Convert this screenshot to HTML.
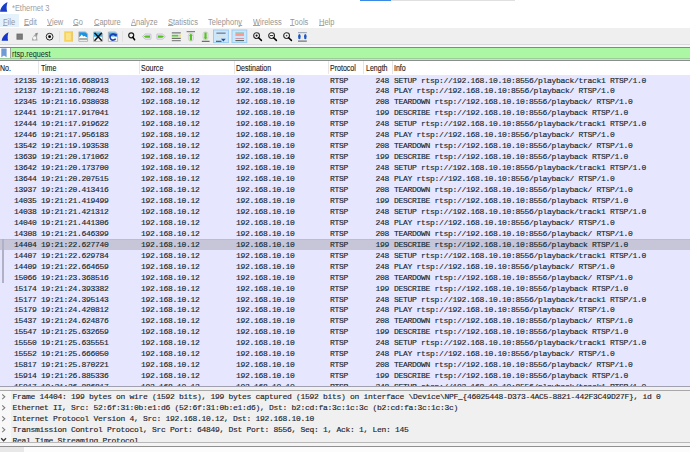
<!DOCTYPE html>
<html><head><meta charset="utf-8">
<style>
html,body{margin:0;padding:0;}
body{width:690px;height:452px;overflow:hidden;position:relative;background:#fff;font-family:"Liberation Sans",sans-serif;}
.a{position:absolute;}
svg{position:absolute;overflow:visible;}
#ttxt{left:12px;top:3px;font-size:8.4px;transform:scaleX(0.89);transform-origin:0 0;color:#a0a0a0;line-height:10px;white-space:nowrap;}
.mi{position:absolute;top:17px;font-size:8.3px;transform:scaleX(0.9);transform-origin:0 0;line-height:10px;color:#969696;white-space:nowrap;}
.mi u{text-decoration:none;position:relative;}.mi u::after{content:"";position:absolute;left:0;right:0;bottom:1.3px;height:0.8px;background:#a4a4a4;}
#filehl{left:0;top:14px;width:19px;height:13px;background:#e5f1fb;}
#tb{left:0;top:28px;width:690px;height:16px;background:#efefef;}
#tbl{left:0;top:44px;width:690px;height:1px;background:#d6dadc;}
#fbar{left:0;top:45px;width:690px;height:15px;background:#f8f6f8;}
#fborder{left:0;top:47px;width:690px;height:1px;background:#7f8a80;}
#bm{left:0;top:48px;width:10px;height:10px;background:#fff;}
#bmsep{left:10px;top:48px;width:1px;height:10px;background:#a0a8a0;}
#fin{left:11px;top:48px;width:679px;height:10px;background:#abf7a3;}
#fin2{left:0;top:58px;width:690px;height:1px;background:#9ccc98;}
#fin3{left:0;top:59px;width:690px;height:1px;background:#dcd6e0;}
#ftxt{left:12px;top:48.9px;font-size:8.3px;transform:scaleX(0.88);transform-origin:0 0;line-height:10px;color:#1c2c1c;white-space:nowrap;}
#hdrline{left:0;top:60px;width:690px;height:1px;background:#8a8e8e;}
#hdr{left:0;top:61px;width:690px;height:13px;background:#fff;}
.h{position:absolute;top:63.4px;font-size:8.4px;transform:scaleX(0.84);transform-origin:0 0;line-height:10px;color:#1a1a1a;-webkit-text-stroke:0.12px #1a1a1a;white-space:nowrap;}
.hs{position:absolute;top:61px;width:1px;height:13px;background:#e6e6e6;}
.r{position:absolute;left:0;width:690px;height:11px;background:#e7e6ff;font-family:"Liberation Mono",monospace;font-size:8px;letter-spacing:-0.3px;line-height:12px;color:#12272e;-webkit-text-stroke:0.14px #12272e;white-space:pre;overflow:hidden;}
.r.sel{background:#c6c6d8;box-shadow:inset 0 1px 0 #bcbcd0;}
.c{position:absolute;top:0;}
.no{right:653.5px;}
.tm{left:41px;}
.src{left:141px;}
.dst{left:236px;}
.pr{left:330px;}
.ln{right:301px;}
.inf{left:394px;}
#conn{left:2px;top:239px;width:2px;height:43.5px;background:#b0b0c6;}
#split1{left:0;top:386px;width:690px;height:1px;background:#a0a0b0;}
#split2{left:0;top:387px;width:690px;height:3px;background:#f0f0f0;}
#split3{left:0;top:390px;width:690px;height:1px;background:#a8a8a8;}
#det{left:0;top:391px;width:690px;height:51px;background:#f0f0f0;overflow:hidden;}
#detl{left:0;top:391px;width:11px;height:51px;background:#f8f8f8;}
.d{position:absolute;left:12.5px;height:11px;font-family:"Liberation Mono",monospace;font-size:8px;letter-spacing:-0.3px;line-height:12px;color:#1c1c28;-webkit-text-stroke:0.14px #1c1c28;white-space:pre;}
#b1{left:0;top:442px;width:690px;height:1px;background:#b8b8b8;}
#b2{left:0;top:443px;width:690px;height:3px;background:#f4f4f4;}
#b3{left:0;top:446px;width:690px;height:1px;background:#909090;}
#b4{left:0;top:447px;width:690px;height:5px;background:#fcfcfc;}
#b5{left:0;top:447px;width:24px;height:5px;background:#e8e8e8;}
</style></head><body>
<!-- title -->
<svg style="left:0;top:2px" width="9" height="10" viewBox="0 0 9 10"><path d="M0 9.7 C0.6 5.5 3.5 1.5 7.6 0.2 C6.4 3.2 6.3 6.5 7.2 9.7 Z" fill="#1a3ec8"/></svg>
<div class="a" id="ttxt">*Ethernet 3</div>
<div class="a" style="left:360px;top:0;width:31px;height:1px;background:#3a8ae4"></div>
<div class="a" style="left:391px;top:0;width:124px;height:1px;background:#e0e0e0"></div>
<!-- menu -->
<div class="a" id="filehl"></div>
<span class="mi" style="left:2.5px"><u>F</u>ile</span>
<span class="mi" style="left:23.5px"><u>E</u>dit</span>
<span class="mi" style="left:47px"><u>V</u>iew</span>
<span class="mi" style="left:73px"><u>G</u>o</span>
<span class="mi" style="left:93.7px"><u>C</u>apture</span>
<span class="mi" style="left:131.2px"><u>A</u>nalyze</span>
<span class="mi" style="left:168.3px"><u>S</u>tatistics</span>
<span class="mi" style="left:208.3px">Telephon<u>y</u></span>
<span class="mi" style="left:253px"><u>W</u>ireless</span>
<span class="mi" style="left:290.4px"><u>T</u>ools</span>
<span class="mi" style="left:319px"><u>H</u>elp</span>
<!-- toolbar -->
<div class="a" id="tb"></div>
<div class="a" id="tbl"></div>
<!-- 1 shark fin start -->
<svg style="left:0;top:28px" width="16" height="16" viewBox="0 0 16 16"><path d="M1.6 12.8 C2.3 9 4.6 5.6 8.5 4.2 C7.6 6.8 7.4 9.8 8.1 12.8 Z" fill="#1537cc"/></svg>
<!-- 2 stop -->
<svg style="left:0;top:28px" width="30" height="16" viewBox="0 0 30 16"><rect x="16.5" y="5.6" width="6.3" height="6.1" fill="#6e6e6e"/><rect x="17.5" y="6.6" width="4.3" height="4.1" fill="#7c7c7c"/></svg>
<!-- 3 restart -->
<svg style="left:0;top:28px" width="40" height="16" viewBox="0 0 40 16"><path d="M31.8 12.6 C32.2 9.2 34 6.2 37.8 4.8 C37 7.2 36.8 9.8 37.6 12.6 Z" fill="#a8a8a8"/><path d="M35 5.6 L37.8 4.8 C37.3 6.2 37.1 7.2 37 8 Z" fill="#8a8a8a"/><circle cx="34.6" cy="10" r="1.7" fill="#f6f6f6"/></svg>
<!-- 4 options -->
<svg style="left:0;top:28px" width="60" height="16" viewBox="0 0 60 16"><circle cx="49.6" cy="8.7" r="3.4" fill="none" stroke="#2a2a2a" stroke-width="1.0"/><circle cx="49.6" cy="8.7" r="1.4" fill="#000"/></svg>
<!-- sep -->
<div class="a" style="left:59px;top:31px;width:1px;height:11px;background:#e2e2e2"></div>
<!-- 5 open file (yellow) -->
<svg style="left:0;top:28px" width="80" height="16" viewBox="0 0 80 16"><rect x="64.2" y="3.3" width="8.2" height="10.4" fill="#f7d35a"/><rect x="66" y="5" width="4.8" height="7" fill="#fbe38c"/><path d="M72.4 3.3 V13.7" stroke="#e8c050" stroke-width="0.8"/></svg>
<!-- 6 save (image file) -->
<svg style="left:0;top:28px" width="90" height="16" viewBox="0 0 90 16"><path d="M78.8 3.9 H85.6 L87.6 5.9 V13.3 H78.8 Z" fill="#fbfbfb" stroke="#a4a4a4" stroke-width="0.8"/><path d="M79.2 4.3 H85.4 L87.2 6.1 V9.4 H79.2 Z" fill="#1c92e2"/><path d="M79.2 9.6 L81.8 6.6 L83.3 8.6 L84.6 7.9 L87.2 9.8 V10.4 H79.2 Z" fill="#fff"/><rect x="79.2" y="10.2" width="8" height="1.6" fill="#909c8e"/></svg>
<!-- 7 close -->
<svg style="left:0;top:28px" width="106" height="16" viewBox="0 0 106 16"><path d="M93.6 4 H100.6 L102.6 6 V13.4 H93.6 Z" fill="#fafafa" stroke="#a4a4a4" stroke-width="0.8"/><path d="M94 4.4 H100.4 L102.2 6.2 V8.8 H94 Z" fill="#36b2f0"/><path d="M94.5 4.8 L101.8 12.8 M101.8 4.8 L94.5 12.8" stroke="#141414" stroke-width="1.5"/></svg>
<!-- 8 reload -->
<svg style="left:0;top:28px" width="120" height="16" viewBox="0 0 120 16"><path d="M108.4 4 H115.6 L117.6 6 V13.4 H108.4 Z" fill="#f8f8f8" stroke="#a8a8a8" stroke-width="0.8"/><path d="M108.8 4.4 H115.4 L117.2 6.2 V8.4 H108.8 Z" fill="#38aef0"/><path d="M115.6 7.6 A3 3 0 1 0 115.6 10.6" fill="none" stroke="#1a3eb0" stroke-width="1.6"/><path d="M113.6 6.2 L117 5.8 L116.2 9 Z" fill="#1a3eb0"/></svg>
<!-- sep -->
<div class="a" style="left:122px;top:31px;width:1px;height:11px;background:#e2e2e2"></div>
<!-- 9 find -->
<svg style="left:0;top:28px" width="140" height="16" viewBox="0 0 140 16"><circle cx="131.2" cy="7.3" r="2.5" fill="none" stroke="#1a1a1a" stroke-width="1.2"/><path d="M132.8 9.2 L134.6 11.8" stroke="#000" stroke-width="1.5" stroke-linecap="round"/></svg>
<!-- 10 back -->
<svg style="left:0;top:28px" width="160" height="16" viewBox="0 0 160 16"><path d="M142.4 8.6 L145.2 6 H150.8 Q151.4 8.6 150.8 11.2 H145.2 Z" fill="#ebe8f0" stroke="#c4bed2" stroke-width="0.9"/><path d="M143.8 8.6 L145.6 7.4 H150 V9.8 H145.6 Z" fill="#52c41c"/></svg>
<!-- 11 forward -->
<svg style="left:0;top:28px" width="170" height="16" viewBox="0 0 170 16"><path d="M165.4 8.6 L162.6 6 H157 Q156.4 8.6 157 11.2 H162.6 Z" fill="#ebe8f0" stroke="#c4bed2" stroke-width="0.9"/><path d="M164 8.6 L162.2 7.4 H157.8 V9.8 H162.2 Z" fill="#52c41c"/></svg>
<!-- 12 go to packet -->
<svg style="left:0;top:28px" width="190" height="16" viewBox="0 0 190 16"><rect x="171.8" y="4.4" width="9" height="1" fill="#585868"/><rect x="171.8" y="6.8" width="6.6" height="1.8" fill="#60c838"/><rect x="179" y="6.6" width="1.8" height="2" fill="#f0e040"/><rect x="171.8" y="9.8" width="9" height="1" fill="#505050"/><rect x="171.8" y="12.2" width="9" height="1" fill="#707070"/></svg>
<!-- 13 first packet -->
<svg style="left:0;top:28px" width="200" height="16" viewBox="0 0 200 16"><rect x="186.6" y="3.2" width="8.4" height="1" fill="#686868"/><rect x="188.4" y="5.2" width="5" height="7.8" rx="2" fill="#ecebf0" stroke="#c8c4d2" stroke-width="0.7"/><path d="M190.9 5.6 L192.9 7.8 L192 7.8 L192 12.4 L189.8 12.4 L189.8 7.8 L188.9 7.8 Z" fill="#56c420"/></svg>
<!-- 14 last packet -->
<svg style="left:0;top:28px" width="215" height="16" viewBox="0 0 215 16"><rect x="203" y="4" width="5" height="7.8" rx="2" fill="#ecebf0" stroke="#c8c4d2" stroke-width="0.7"/><path d="M205.5 11.6 L207.5 9.4 L206.6 9.4 L206.6 4.6 L204.4 4.6 L204.4 9.4 L203.5 9.4 Z" fill="#56c420"/><rect x="201.8" y="12.8" width="7.8" height="1" fill="#505050"/></svg>
<!-- 15 autoscroll (checked) -->
<svg style="left:0;top:28px" width="250" height="16" viewBox="0 0 250 16"><rect x="213.5" y="2" width="14.9" height="12.6" fill="#cce6fb" stroke="#99ccf4" stroke-width="1"/><rect x="216.4" y="4.6" width="9.2" height="1.1" fill="#686878"/><rect x="216.4" y="7.4" width="8" height="1" fill="#e8e2c4"/><rect x="216" y="12.8" width="5.5" height="0.9" fill="#303030"/><path d="M221 10.8 L225.8 10.8 L223.4 13.6 Z" fill="#1d4ea4"/></svg>
<!-- 16 colorize (checked) -->
<svg style="left:0;top:28px" width="250" height="16" viewBox="0 0 250 16"><rect x="232" y="2" width="14.8" height="12.6" fill="#cce6fb" stroke="#99ccf4" stroke-width="1"/><rect x="235.4" y="4.6" width="8.6" height="0.9" fill="#5aa884"/><rect x="235.4" y="6" width="8.6" height="1.9" fill="#f89a8e"/><rect x="235.4" y="10.1" width="8.6" height="0.9" fill="#c8909a"/><rect x="235.4" y="12.1" width="8.6" height="1" fill="#4a5a58"/></svg>
<!-- 17 zoom in -->
<svg style="left:0;top:28px" width="300" height="16" viewBox="0 0 300 16"><circle cx="256.6" cy="7.6" r="2.9" fill="#fff" stroke="#2a2a2a" stroke-width="1.1"/><circle cx="256.6" cy="7.6" r="1.1" fill="#111"/><path d="M258.6 9.8 L261.4 12.4" stroke="#000" stroke-width="1.5" stroke-linecap="round"/></svg>
<!-- 18 zoom out -->
<svg style="left:0;top:28px" width="300" height="16" viewBox="0 0 300 16"><circle cx="271.6" cy="7.6" r="2.9" fill="#fff" stroke="#2a2a2a" stroke-width="1.1"/><rect x="270" y="7.1" width="3.2" height="1" fill="#222"/><path d="M273.6 9.8 L276.4 12.4" stroke="#000" stroke-width="1.5" stroke-linecap="round"/></svg>
<!-- 19 normal size -->
<svg style="left:0;top:28px" width="300" height="16" viewBox="0 0 300 16"><circle cx="286.6" cy="7.6" r="2.9" fill="#fff" stroke="#2a2a2a" stroke-width="1.1"/><circle cx="286.6" cy="7.6" r="0.9" fill="#444"/><path d="M288.6 9.8 L291.4 12.4" stroke="#000" stroke-width="1.5" stroke-linecap="round"/></svg>
<!-- 20 resize columns -->
<svg style="left:0;top:28px" width="310" height="16" viewBox="0 0 310 16"><rect x="298" y="4.2" width="8.8" height="1" fill="#8c98b0"/><rect x="302" y="5.2" width="0.9" height="7" fill="#ece6d6"/><ellipse cx="299.4" cy="8.6" rx="1.3" ry="2.7" fill="#1c56c4"/><ellipse cx="305.3" cy="8.6" rx="1.3" ry="2.7" fill="#1c56c4"/><rect x="298" y="12.6" width="8.8" height="1" fill="#505860"/></svg>

<!-- filter -->
<div class="a" id="fbar"></div>
<div class="a" id="fborder"></div>
<div class="a" id="bm"></div>
<svg style="left:1px;top:48px" width="6" height="10" viewBox="0 0 6 10"><path d="M0.3 0.4 H5.6 V9.3 L2.95 7.4 L0.3 9.3 Z" fill="#6f9bd6"/></svg>
<div class="a" id="bmsep"></div>
<div class="a" id="fin"></div>
<div class="a" id="fin2"></div>
<div class="a" id="fin3"></div>
<div class="a" id="ftxt">rtsp.request</div>
<!-- header -->
<div class="a" id="hdrline"></div>
<div class="a" id="hdr"></div>
<span class="h" style="left:0px">No.</span>
<span class="hs" style="left:38px"></span>
<span class="h" style="left:41px">Time</span>
<span class="hs" style="left:139px"></span>
<span class="h" style="left:141px">Source</span>
<span class="hs" style="left:234px"></span>
<span class="h" style="left:236px">Destination</span>
<span class="hs" style="left:328px"></span>
<span class="h" style="left:330px">Protocol</span>
<span class="hs" style="left:363px"></span>
<span class="h" style="left:366px">Length</span>
<span class="hs" style="left:392px"></span>
<span class="h" style="left:394px">Info</span>
<div class="r" style="top:74.5px"><span class="c no">12135</span><span class="c tm">19:21:16.668913</span><span class="c src">192.168.10.12</span><span class="c dst">192.168.10.10</span><span class="c pr">RTSP</span><span class="c ln">248</span><span class="c inf">SETUP rtsp://192.168.10.10:8556/playback/track1 RTSP/1.0</span></div>
<div class="r" style="top:85.45px"><span class="c no">12137</span><span class="c tm">19:21:16.700248</span><span class="c src">192.168.10.12</span><span class="c dst">192.168.10.10</span><span class="c pr">RTSP</span><span class="c ln">248</span><span class="c inf">PLAY rtsp://192.168.10.10:8556/playback/ RTSP/1.0</span></div>
<div class="r" style="top:96.4px"><span class="c no">12345</span><span class="c tm">19:21:16.938038</span><span class="c src">192.168.10.12</span><span class="c dst">192.168.10.10</span><span class="c pr">RTSP</span><span class="c ln">208</span><span class="c inf">TEARDOWN rtsp://192.168.10.10:8556/playback/ RTSP/1.0</span></div>
<div class="r" style="top:107.35px"><span class="c no">12441</span><span class="c tm">19:21:17.917041</span><span class="c src">192.168.10.12</span><span class="c dst">192.168.10.10</span><span class="c pr">RTSP</span><span class="c ln">199</span><span class="c inf">DESCRIBE rtsp://192.168.10.10:8556/playback RTSP/1.0</span></div>
<div class="r" style="top:118.3px"><span class="c no">12444</span><span class="c tm">19:21:17.919622</span><span class="c src">192.168.10.12</span><span class="c dst">192.168.10.10</span><span class="c pr">RTSP</span><span class="c ln">248</span><span class="c inf">SETUP rtsp://192.168.10.10:8556/playback/track1 RTSP/1.0</span></div>
<div class="r" style="top:129.25px"><span class="c no">12446</span><span class="c tm">19:21:17.956183</span><span class="c src">192.168.10.12</span><span class="c dst">192.168.10.10</span><span class="c pr">RTSP</span><span class="c ln">248</span><span class="c inf">PLAY rtsp://192.168.10.10:8556/playback/ RTSP/1.0</span></div>
<div class="r" style="top:140.2px"><span class="c no">13542</span><span class="c tm">19:21:19.193538</span><span class="c src">192.168.10.12</span><span class="c dst">192.168.10.10</span><span class="c pr">RTSP</span><span class="c ln">208</span><span class="c inf">TEARDOWN rtsp://192.168.10.10:8556/playback/ RTSP/1.0</span></div>
<div class="r" style="top:151.15px"><span class="c no">13639</span><span class="c tm">19:21:20.171062</span><span class="c src">192.168.10.12</span><span class="c dst">192.168.10.10</span><span class="c pr">RTSP</span><span class="c ln">199</span><span class="c inf">DESCRIBE rtsp://192.168.10.10:8556/playback RTSP/1.0</span></div>
<div class="r" style="top:162.1px"><span class="c no">13642</span><span class="c tm">19:21:20.173700</span><span class="c src">192.168.10.12</span><span class="c dst">192.168.10.10</span><span class="c pr">RTSP</span><span class="c ln">248</span><span class="c inf">SETUP rtsp://192.168.10.10:8556/playback/track1 RTSP/1.0</span></div>
<div class="r" style="top:173.05px"><span class="c no">13644</span><span class="c tm">19:21:20.207515</span><span class="c src">192.168.10.12</span><span class="c dst">192.168.10.10</span><span class="c pr">RTSP</span><span class="c ln">248</span><span class="c inf">PLAY rtsp://192.168.10.10:8556/playback/ RTSP/1.0</span></div>
<div class="r" style="top:184.0px"><span class="c no">13937</span><span class="c tm">19:21:20.413416</span><span class="c src">192.168.10.12</span><span class="c dst">192.168.10.10</span><span class="c pr">RTSP</span><span class="c ln">208</span><span class="c inf">TEARDOWN rtsp://192.168.10.10:8556/playback/ RTSP/1.0</span></div>
<div class="r" style="top:194.95px"><span class="c no">14035</span><span class="c tm">19:21:21.419499</span><span class="c src">192.168.10.12</span><span class="c dst">192.168.10.10</span><span class="c pr">RTSP</span><span class="c ln">199</span><span class="c inf">DESCRIBE rtsp://192.168.10.10:8556/playback RTSP/1.0</span></div>
<div class="r" style="top:205.9px"><span class="c no">14038</span><span class="c tm">19:21:21.421312</span><span class="c src">192.168.10.12</span><span class="c dst">192.168.10.10</span><span class="c pr">RTSP</span><span class="c ln">248</span><span class="c inf">SETUP rtsp://192.168.10.10:8556/playback/track1 RTSP/1.0</span></div>
<div class="r" style="top:216.85px"><span class="c no">14040</span><span class="c tm">19:21:21.441306</span><span class="c src">192.168.10.12</span><span class="c dst">192.168.10.10</span><span class="c pr">RTSP</span><span class="c ln">248</span><span class="c inf">PLAY rtsp://192.168.10.10:8556/playback/ RTSP/1.0</span></div>
<div class="r" style="top:227.8px"><span class="c no">14308</span><span class="c tm">19:21:21.646399</span><span class="c src">192.168.10.12</span><span class="c dst">192.168.10.10</span><span class="c pr">RTSP</span><span class="c ln">208</span><span class="c inf">TEARDOWN rtsp://192.168.10.10:8556/playback/ RTSP/1.0</span></div>
<div class="r sel" style="top:238.75px"><span class="c no">14404</span><span class="c tm">19:21:22.627740</span><span class="c src">192.168.10.12</span><span class="c dst">192.168.10.10</span><span class="c pr">RTSP</span><span class="c ln">199</span><span class="c inf">DESCRIBE rtsp://192.168.10.10:8556/playback RTSP/1.0</span></div>
<div class="r" style="top:249.7px"><span class="c no">14407</span><span class="c tm">19:21:22.629784</span><span class="c src">192.168.10.12</span><span class="c dst">192.168.10.10</span><span class="c pr">RTSP</span><span class="c ln">248</span><span class="c inf">SETUP rtsp://192.168.10.10:8556/playback/track1 RTSP/1.0</span></div>
<div class="r" style="top:260.65px"><span class="c no">14409</span><span class="c tm">19:21:22.664659</span><span class="c src">192.168.10.12</span><span class="c dst">192.168.10.10</span><span class="c pr">RTSP</span><span class="c ln">248</span><span class="c inf">PLAY rtsp://192.168.10.10:8556/playback/ RTSP/1.0</span></div>
<div class="r" style="top:271.6px"><span class="c no">15066</span><span class="c tm">19:21:23.368516</span><span class="c src">192.168.10.12</span><span class="c dst">192.168.10.10</span><span class="c pr">RTSP</span><span class="c ln">208</span><span class="c inf">TEARDOWN rtsp://192.168.10.10:8556/playback/ RTSP/1.0</span></div>
<div class="r" style="top:282.55px"><span class="c no">15174</span><span class="c tm">19:21:24.393382</span><span class="c src">192.168.10.12</span><span class="c dst">192.168.10.10</span><span class="c pr">RTSP</span><span class="c ln">199</span><span class="c inf">DESCRIBE rtsp://192.168.10.10:8556/playback RTSP/1.0</span></div>
<div class="r" style="top:293.5px"><span class="c no">15177</span><span class="c tm">19:21:24.395143</span><span class="c src">192.168.10.12</span><span class="c dst">192.168.10.10</span><span class="c pr">RTSP</span><span class="c ln">248</span><span class="c inf">SETUP rtsp://192.168.10.10:8556/playback/track1 RTSP/1.0</span></div>
<div class="r" style="top:304.45px"><span class="c no">15179</span><span class="c tm">19:21:24.420812</span><span class="c src">192.168.10.12</span><span class="c dst">192.168.10.10</span><span class="c pr">RTSP</span><span class="c ln">248</span><span class="c inf">PLAY rtsp://192.168.10.10:8556/playback/ RTSP/1.0</span></div>
<div class="r" style="top:315.4px"><span class="c no">15437</span><span class="c tm">19:21:24.624876</span><span class="c src">192.168.10.12</span><span class="c dst">192.168.10.10</span><span class="c pr">RTSP</span><span class="c ln">208</span><span class="c inf">TEARDOWN rtsp://192.168.10.10:8556/playback/ RTSP/1.0</span></div>
<div class="r" style="top:326.35px"><span class="c no">15547</span><span class="c tm">19:21:25.632659</span><span class="c src">192.168.10.12</span><span class="c dst">192.168.10.10</span><span class="c pr">RTSP</span><span class="c ln">199</span><span class="c inf">DESCRIBE rtsp://192.168.10.10:8556/playback RTSP/1.0</span></div>
<div class="r" style="top:337.3px"><span class="c no">15550</span><span class="c tm">19:21:25.635551</span><span class="c src">192.168.10.12</span><span class="c dst">192.168.10.10</span><span class="c pr">RTSP</span><span class="c ln">248</span><span class="c inf">SETUP rtsp://192.168.10.10:8556/playback/track1 RTSP/1.0</span></div>
<div class="r" style="top:348.25px"><span class="c no">15552</span><span class="c tm">19:21:25.666050</span><span class="c src">192.168.10.12</span><span class="c dst">192.168.10.10</span><span class="c pr">RTSP</span><span class="c ln">248</span><span class="c inf">PLAY rtsp://192.168.10.10:8556/playback/ RTSP/1.0</span></div>
<div class="r" style="top:359.2px"><span class="c no">15817</span><span class="c tm">19:21:25.870221</span><span class="c src">192.168.10.12</span><span class="c dst">192.168.10.10</span><span class="c pr">RTSP</span><span class="c ln">208</span><span class="c inf">TEARDOWN rtsp://192.168.10.10:8556/playback/ RTSP/1.0</span></div>
<div class="r" style="top:370.15px"><span class="c no">15914</span><span class="c tm">19:21:26.885336</span><span class="c src">192.168.10.12</span><span class="c dst">192.168.10.10</span><span class="c pr">RTSP</span><span class="c ln">199</span><span class="c inf">DESCRIBE rtsp://192.168.10.10:8556/playback RTSP/1.0</span></div>
<div class="r" style="top:381.1px"><span class="c no">15917</span><span class="c tm">19:21:26.886817</span><span class="c src">192.168.10.12</span><span class="c dst">192.168.10.10</span><span class="c pr">RTSP</span><span class="c ln">248</span><span class="c inf">SETUP rtsp://192.168.10.10:8556/playback/track1 RTSP/1.0</span></div>
<div class="a" id="conn"></div>
<div class="a" id="split1"></div>
<div class="a" id="split2"></div>
<div class="a" id="split3"></div>
<div class="a" id="det"></div>
<div class="a" id="detl"></div>
<svg style="left:0;top:391px" width="11" height="51" viewBox="0 0 11 51">
<g fill="none" stroke="#7a7a7a" stroke-width="1.1">
<path d="M2.2 3.4 L4.8 5.8 L2.2 8.2"/>
<path d="M2.2 14.4 L4.8 16.8 L2.2 19.2"/>
<path d="M2.2 25.4 L4.8 27.8 L2.2 30.2"/>
<path d="M2.2 36.4 L4.8 38.8 L2.2 41.2"/>
<path d="M1.2 47.2 L3.6 49.8 L6 47.2" stroke="#3a3a3a" stroke-width="1.3"/>
</g></svg>
<span class="d" style="top:391px">Frame 14404: 199 bytes on wire (1592 bits), 199 bytes captured (1592 bits) on interface \Device\NPF_{46025448-D373-4AC5-8821-442F3C49D27F}, id 0</span>
<span class="d" style="top:402px">Ethernet II, Src: 52:6f:31:0b:e1:d6 (52:6f:31:0b:e1:d6), Dst: b2:cd:fa:3c:1c:3c (b2:cd:fa:3c:1c:3c)</span>
<span class="d" style="top:413px">Internet Protocol Version 4, Src: 192.168.10.12, Dst: 192.168.10.10</span>
<span class="d" style="top:424px">Transmission Control Protocol, Src Port: 64849, Dst Port: 8556, Seq: 1, Ack: 1, Len: 145</span>
<div class="a" style="left:0;top:435px;width:690px;height:7px;overflow:hidden;"><span class="d" style="top:0px">Real Time Streaming Protocol</span></div>
<div class="a" id="b1"></div>
<div class="a" id="b2"></div>
<div class="a" id="b3"></div>
<div class="a" id="b4"></div>
<div class="a" id="b5"></div>
</body></html>
